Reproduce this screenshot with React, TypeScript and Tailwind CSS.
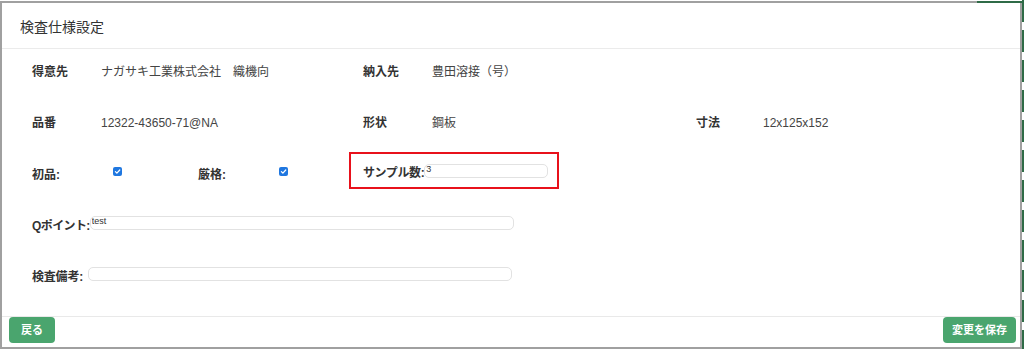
import React from "react";

const font = { fontFamily: '"Liberation Sans", "Noto Sans CJK JP", sans-serif' };

function Check() {
  return (
    <span className="mb-[4px] inline-flex h-[9px] w-[9px] items-center justify-center rounded-[2px] bg-[#1f77e0]">
      <svg width="7" height="7" viewBox="0 0 10 10" fill="none">
        <path d="M2 5.2 L4.1 7.3 L8.2 2.8" stroke="white" strokeWidth="1.8" strokeLinecap="round" strokeLinejoin="round" />
      </svg>
    </span>
  );
}

function Field({ value, w, mb = "mb-[4px]" }: { value: string; w: string; mb?: string }) {
  return (
    <input
      readOnly
      value={value}
      className={`${w} ${mb} h-[14px] rounded-[5px] border border-[#e2e2e2] bg-white px-[1px] pt-0 pb-[4px] text-[9px] leading-none text-[#333] outline-none`}
      style={font}
    />
  );
}

function InfoCell({ label, value, w, lw = "w-[69px]" }: { label: string; value: string; w: string; lw?: string }) {
  return (
    <div className={`flex ${w} items-center`}>
      <div className={`${lw} shrink-0 text-[12px] font-bold text-[#333]`}>{label}</div>
      <div className="text-[12px] whitespace-nowrap text-[#444]">{value}</div>
    </div>
  );
}

export default function App() {
  return (
    <div className="relative h-[349px] w-[1024px] overflow-hidden bg-white pt-px" style={font}>
      <div className="flex h-[348px] w-[1022px] flex-col border-2 border-[#a0a0a0] bg-white">
        <div className="flex h-[46px] shrink-0 items-center border-b border-[#ebebeb] pt-[3px] pl-[18px]">
          <span className="text-[14px] text-[#333]">検査仕様設定</span>
        </div>
        <div className="-mt-[3px] flex flex-col pl-[30px]">
          <div className="flex h-[51px] items-center">
            <InfoCell label="得意先" value="ナガサキ工業株式会社　織機向" w="w-[331px]" />
            <InfoCell label="納入先" value="豊田溶接（号）" w="w-[333px]" />
          </div>
          <div className="flex h-[51px] items-center">
            <InfoCell label="品番" value="12322-43650-71@NA" w="w-[331px]" />
            <InfoCell label="形状" value="鋼板" w="w-[333px]" />
            <InfoCell label="寸法" value="12x125x152" w="w-[200px]" lw="w-[67px]" />
          </div>
          <div className="flex h-[51px] items-center">
            <div className="flex w-[166px] items-center">
              <div className="w-[81px] pt-[2px] text-[12px] font-bold text-[#333]">初品:</div>
              <Check />
            </div>
            <div className="flex w-[151px] items-center">
              <div className="w-[81px] pt-[2px] text-[12px] font-bold text-[#333]">厳格:</div>
              <Check />
            </div>
            <div className="mb-[6px] flex h-[37px] w-[210px] items-center border-2 border-[#e8111b] pt-[5px] pl-[12px]">
              <span className="text-[12px] font-bold tracking-[-0.4px] text-[#333]">サンプル数:</span>
              <Field value="3" w="w-[124px]" mb="mb-[5px]" />
            </div>
          </div>
          <div className="flex h-[51px] items-center">
            <span className="pt-[2px] text-[12px] font-bold tracking-[-0.6px] text-[#333]">Qポイント:</span>
            <Field value="test" w="w-[424px]" />
          </div>
          <div className="flex h-[51px] items-center">
            <span className="pt-[2px] text-[12px] font-bold tracking-[-0.2px] text-[#333]">検査備考:</span>
            <span className="w-[5px]" />
            <Field value="" w="w-[424px]" />
          </div>
        </div>
        <div className="mt-auto flex items-start justify-between border-t border-[#e9e9e9] pr-[4px] pl-[7px] pb-[4px]">
          <button className="h-[26px] rounded-[4px] bg-[#4aa56e] px-[12px] text-[11px] font-bold text-white">戻る</button>
          <button className="h-[26px] rounded-[4px] bg-[#4aa56e] px-[9px] text-[11px] font-bold text-white">変更を保存</button>
        </div>
      </div>
      <div className="absolute top-px left-[977px] h-[2px] w-[45px] bg-[#2f6b47]" />
      <div className="absolute top-0 right-0 h-full w-[2px] bg-[repeating-linear-gradient(to_bottom,#2f6b47_0_22px,transparent_22px_30px)]" />
    </div>
  );
}
